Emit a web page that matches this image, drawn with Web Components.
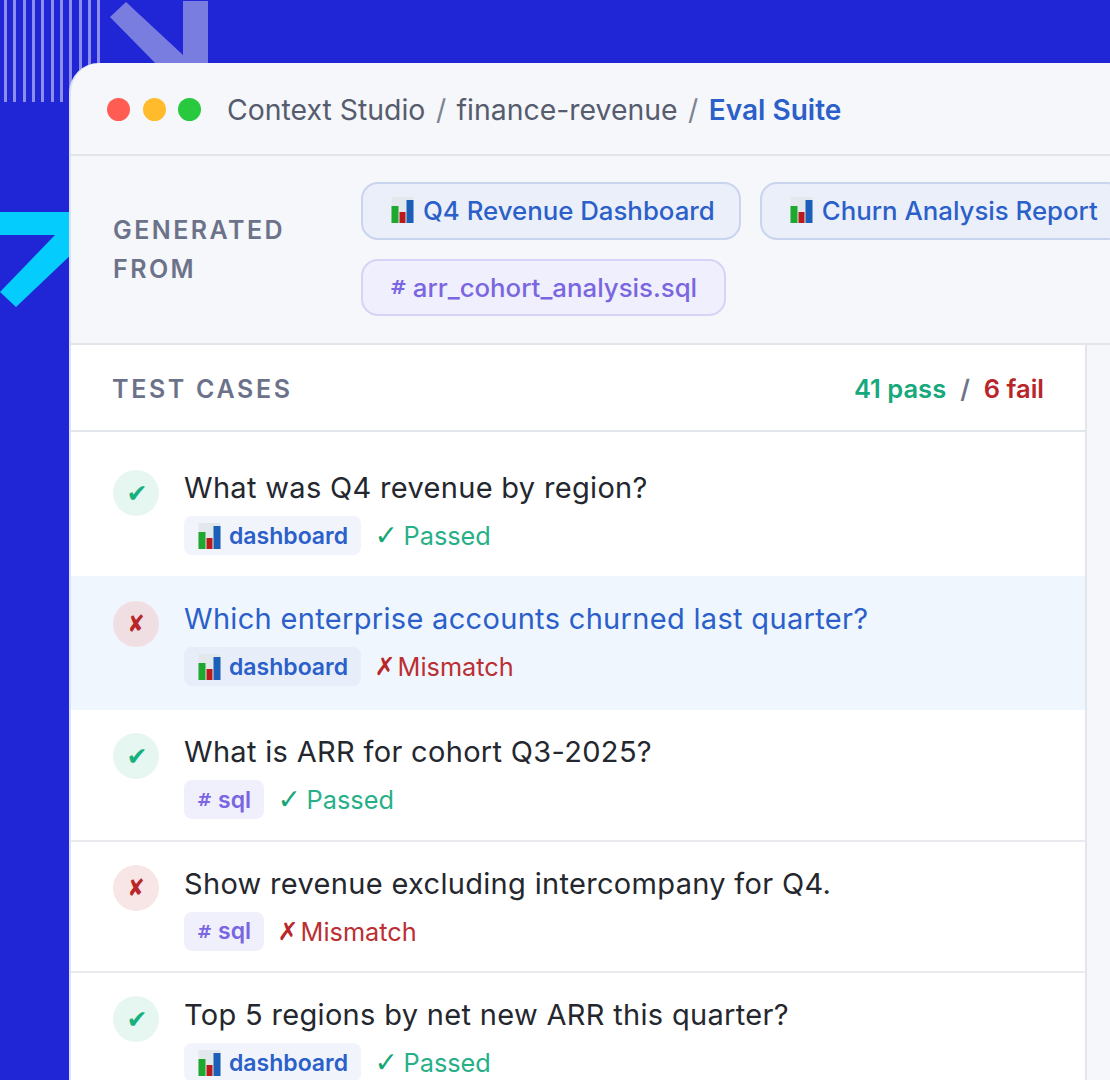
<!DOCTYPE html>
<html>
<head>
<meta charset="utf-8">
<style>
  html, body { margin: 0; height: 1080px; overflow: hidden; background: #2026d6; font-family: Inter, "Noto Sans", sans-serif; }
</style>
</head>
<body>
<bg-decor></bg-decor>
<app-window>
  <window-bar></window-bar>
  <source-strip>
    <source-chip kind="dash">Q4 Revenue Dashboard</source-chip>
    <source-chip kind="dash">Churn Analysis Report</source-chip>
    <source-chip kind="sql">arr_cohort_analysis.sql</source-chip>
  </source-strip>
  <case-panel>
    <test-row type="dashboard" status="pass" first>What was Q4 revenue by region?</test-row>
    <test-row type="dashboard" status="fail" active>Which enterprise accounts churned last quarter?</test-row>
    <test-row type="sql" status="pass">What is ARR for cohort Q3-2025?</test-row>
    <test-row type="sql" status="fail">Show revenue excluding intercompany for Q4.</test-row>
    <test-row type="dashboard" status="pass">Top 5 regions by net new ARR this quarter?</test-row>
  </case-panel>
</app-window>

<script>
const barIcon = `<svg class="bars" viewBox="0 0 22 26" width="23" height="26" aria-hidden="true">
  <rect x="0" y="0" width="22" height="26" fill="#e3e8ec"/>
  <rect x="0" y="9" width="7" height="17" fill="#1fa82f"/>
  <rect x="8" y="15" width="6" height="11" fill="#bb1a1a"/>
  <rect x="15" y="3" width="7" height="23" fill="#1b5fb8"/>
</svg>`;

class BgDecor extends HTMLElement {
    constructor() {
        super();
        this.attachShadow({ mode: 'open' });
        this.shadowRoot.innerHTML = `
        <style>
            :host { position: absolute; left: 0; top: 0; width: 300px; height: 340px; }
            .stripes {
                position: absolute; left: 4px; top: 0; width: 97px; height: 102px;
                background: repeating-linear-gradient(90deg, #8b8eea 0 3px, transparent 3px 9.33px);
            }
            svg { position: absolute; left: 0; top: 0; }
        </style>
        <div class="stripes"></div>
        <svg width="300" height="340" viewBox="0 0 300 340">
            <polygon points="110,17 126,2 183,55 183,1 208,1 208,70 162,70" fill="#7a7de0"/>
            <polygon points="0,212 75,212 75,251 16,307 0,292 55,235 0,235" fill="#04cdfd"/>
        </svg>`;
    }
}

class AppWindow extends HTMLElement {
    constructor() {
        super();
        this.attachShadow({ mode: 'open' });
        this.shadowRoot.innerHTML = `
        <style>
            :host {
                display: block; position: relative; box-sizing: border-box;
                margin: 63px 0 0 69px; width: 1041px; height: 1017px;
                background: #f5f7fa; border-left: 2px solid #dde2f3;
                border-top-left-radius: 30px; overflow: hidden;
            }
        </style>
        <slot></slot>`;
    }
}

class WindowBar extends HTMLElement {
    constructor() {
        super();
        this.attachShadow({ mode: 'open' });
        this.shadowRoot.innerHTML = `
        <style>
            :host {
                display: flex; align-items: center; box-sizing: border-box;
                height: 93px; padding: 2px 0 0 36px;
                border-bottom: 2px solid #e2e5ea;
                font-size: 28.4px; color: #565c6e; white-space: nowrap;
            }
            .dots { display: flex; gap: 12.5px; margin-right: 26px; }
            .dots i { width: 23px; height: 23px; border-radius: 50%; }
            .sep { margin: 0 10.5px; color: #7d8394; }
            .cur { color: #2b5fc9; font-size: 28px; font-weight: 600; }
        </style>
        <div class="dots">
            <i style="background:#ff5c54"></i><i style="background:#ffbb2c"></i><i style="background:#28c83f"></i>
        </div>
        <span>Context Studio</span><span class="sep">/</span><span>finance-revenue</span><span class="sep">/</span><span class="cur">Eval Suite</span>`;
    }
}

class SourceStrip extends HTMLElement {
    constructor() {
        super();
        this.attachShadow({ mode: 'open' });
        this.shadowRoot.innerHTML = `
        <style>
            :host {
                display: flex; align-items: center; box-sizing: border-box;
                height: 189px; padding-left: 42px;
                border-bottom: 2px solid #e2e5ea;
            }
            .label {
                width: 248px; flex: none; font-size: 25px; line-height: 39px; font-weight: 600;
                letter-spacing: 2.45px; color: #6b7289;
            }
            .chips { display: flex; flex-direction: column; gap: 19px; min-width: 0; margin-top: -1px; overflow: hidden; }
            .line { display: flex; gap: 19px; }
        </style>
        <div class="label">GENERATED<br>FROM</div>
        <div class="chips"><div class="line"><slot name="a"></slot></div><div class="line"><slot name="b"></slot></div></div>`;
    }
    connectedCallback() {
        // two chips on the first line, the rest below
        [...this.children].forEach((chip, i) => chip.slot = i < 2 ? 'a' : 'b');
    }
}

class SourceChip extends HTMLElement {
    constructor() {
        super();
        this.attachShadow({ mode: 'open' });
        const sql = this.getAttribute('kind') === 'sql';
        this.shadowRoot.innerHTML = `
        <style>
            :host {
                display: inline-flex; flex: none; align-items: center; gap: 9px; box-sizing: border-box;
                height: 57.5px; padding: 0 ${sql ? 27 : 24}px 0 28px; border-radius: 17px;
                font-size: 25.8px; font-weight: 500; white-space: nowrap;
                background: ${sql ? '#efeffd' : '#ebeff9'};
                border: 2px solid ${sql ? '#d6d4f6' : '#c9d4ef'};
                color: ${sql ? '#7a66e0' : '#2b5fc9'};
            }
            .hash { font: 700 20px "DejaVu Sans", sans-serif; margin: 0 -3px 0 -1px; }
            svg { display: block; margin-top: -1px; }
        </style>
        ${sql ? '<span class="hash">#</span>' : barIcon}
        <slot></slot>`;
    }
}

class CasePanel extends HTMLElement {
    constructor() {
        super();
        this.attachShadow({ mode: 'open' });
        this.shadowRoot.innerHTML = `
        <style>
            :host { display: block; box-sizing: border-box; width: 1016px; height: 800px; background: #fff; border-right: 2px solid #e2e5ea; }
            header {
                display: flex; align-items: center; justify-content: space-between; box-sizing: border-box;
                height: 87px; padding: 2px 41px 0 41px; border-bottom: 2px solid #e2e5ea;
            }
            .title { font-size: 25px; font-weight: 600; letter-spacing: 2.65px; color: #6b7289; }
            .count { font-size: 25.5px; font-weight: 600; white-space: nowrap; }
            .pass { color: #17a87c; }
            .fail { color: #b8262a; }
            .sep { color: #6f7586; margin: 0 14px; font-weight: 600; }
        </style>
        <header>
            <span class="title">TEST CASES</span>
            <span class="count"><span class="pass">41 pass</span><span class="sep">/</span><span class="fail">6 fail</span></span>
        </header>
        <slot></slot>`;
    }
}

class TypeTag extends HTMLElement {
    constructor() {
        super();
        this.attachShadow({ mode: 'open' });
        const sql = this.getAttribute('type') === 'sql';
        this.shadowRoot.innerHTML = `
        <style>
            :host {
                display: inline-flex; align-items: center; gap: 8px; box-sizing: border-box;
                height: 39px; padding: 0 12.5px 0 14px; border-radius: 8px;
                font-size: 23px; font-weight: 600;
                background: ${sql ? '#f0f0fd' : 'var(--tag-bg, #f1f4fb)'};
                color: ${sql ? '#7a66e0' : '#2b5fc9'};
            }
            .hash { font: 700 18px "DejaVu Sans", sans-serif; margin: 0 -2px 0 -1px; }
            svg { display: block; }
        </style>
        ${sql ? '<span class="hash">#</span>' : barIcon}
        <span>${this.getAttribute('type')}</span>`;
    }
}

class TestRow extends HTMLElement {
    constructor() {
        super();
        this.attachShadow({ mode: 'open' });
        const pass = this.getAttribute('status') === 'pass';
        this.shadowRoot.innerHTML = `
        <style>
            :host {
                display: flex; align-items: flex-start; box-sizing: border-box; gap: 25px;
                height: 131.5px; padding: 25px 41px 0 42px;
                border-bottom: 2px solid #e9ebef; color: #24272e;
            }
            :host([first]) { height: 144px; padding-top: 39px; border-bottom: none; }
            :host([active]) { height: 134px; padding-top: 26px; background: #f0f6fd; border-bottom: none; --tag-bg: #e7eef9; color: #2b5fc9; }
            .mark {
                flex: none; width: 46px; height: 46px; margin-top: -2px; border-radius: 50%;
                display: flex; align-items: center; justify-content: center;
                background: ${pass ? '#e6f6f1' : '#f8e6e6'};
                color: ${pass ? '#17b07f' : '#b8262a'};
            }
            .mark span { display: block; font: 700 ${pass ? 25 : 24}px "DejaVu Sans", sans-serif; transform: ${pass ? 'translateX(1px)' : 'scaleX(.85)'}; }
            :host([first]) .mark, :host([active]) .mark { margin-top: -1px; }
            :host([active]) .mark { background: #efdfe3; }
            .title { font-size: 29px; line-height: 34px; letter-spacing: 0.32px; white-space: nowrap; }
            .meta { display: flex; align-items: center; gap: 17px; margin-top: 11px; }
            .status { display: flex; align-items: center; font-size: 25.3px; white-space: nowrap; color: ${pass ? '#27b088' : '#bb2f33'}; }
            .glyph { margin-left: -3px; width: ${pass ? 29 : 23}px; font: ${pass ? 28 : 25}px "DejaVu Sans", sans-serif; color: ${pass ? '#17a678' : '#b8262a'}; }
        </style>
        <div class="mark"><span>${pass ? '\u2714' : '\u2718'}</span></div>
        <div>
            <div class="title"><slot></slot></div>
            <div class="meta">
                <type-tag type="${this.getAttribute('type')}"></type-tag>
                <span class="status"><span class="glyph">${pass ? '\u2713' : '\u2717'}</span>${pass ? 'Passed' : 'Mismatch'}</span>
            </div>
        </div>`;
    }
}

customElements.define('bg-decor', BgDecor);
customElements.define('app-window', AppWindow);
customElements.define('window-bar', WindowBar);
customElements.define('source-strip', SourceStrip);
customElements.define('source-chip', SourceChip);
customElements.define('case-panel', CasePanel);
customElements.define('type-tag', TypeTag);
customElements.define('test-row', TestRow);
</script>
</body>
</html>
